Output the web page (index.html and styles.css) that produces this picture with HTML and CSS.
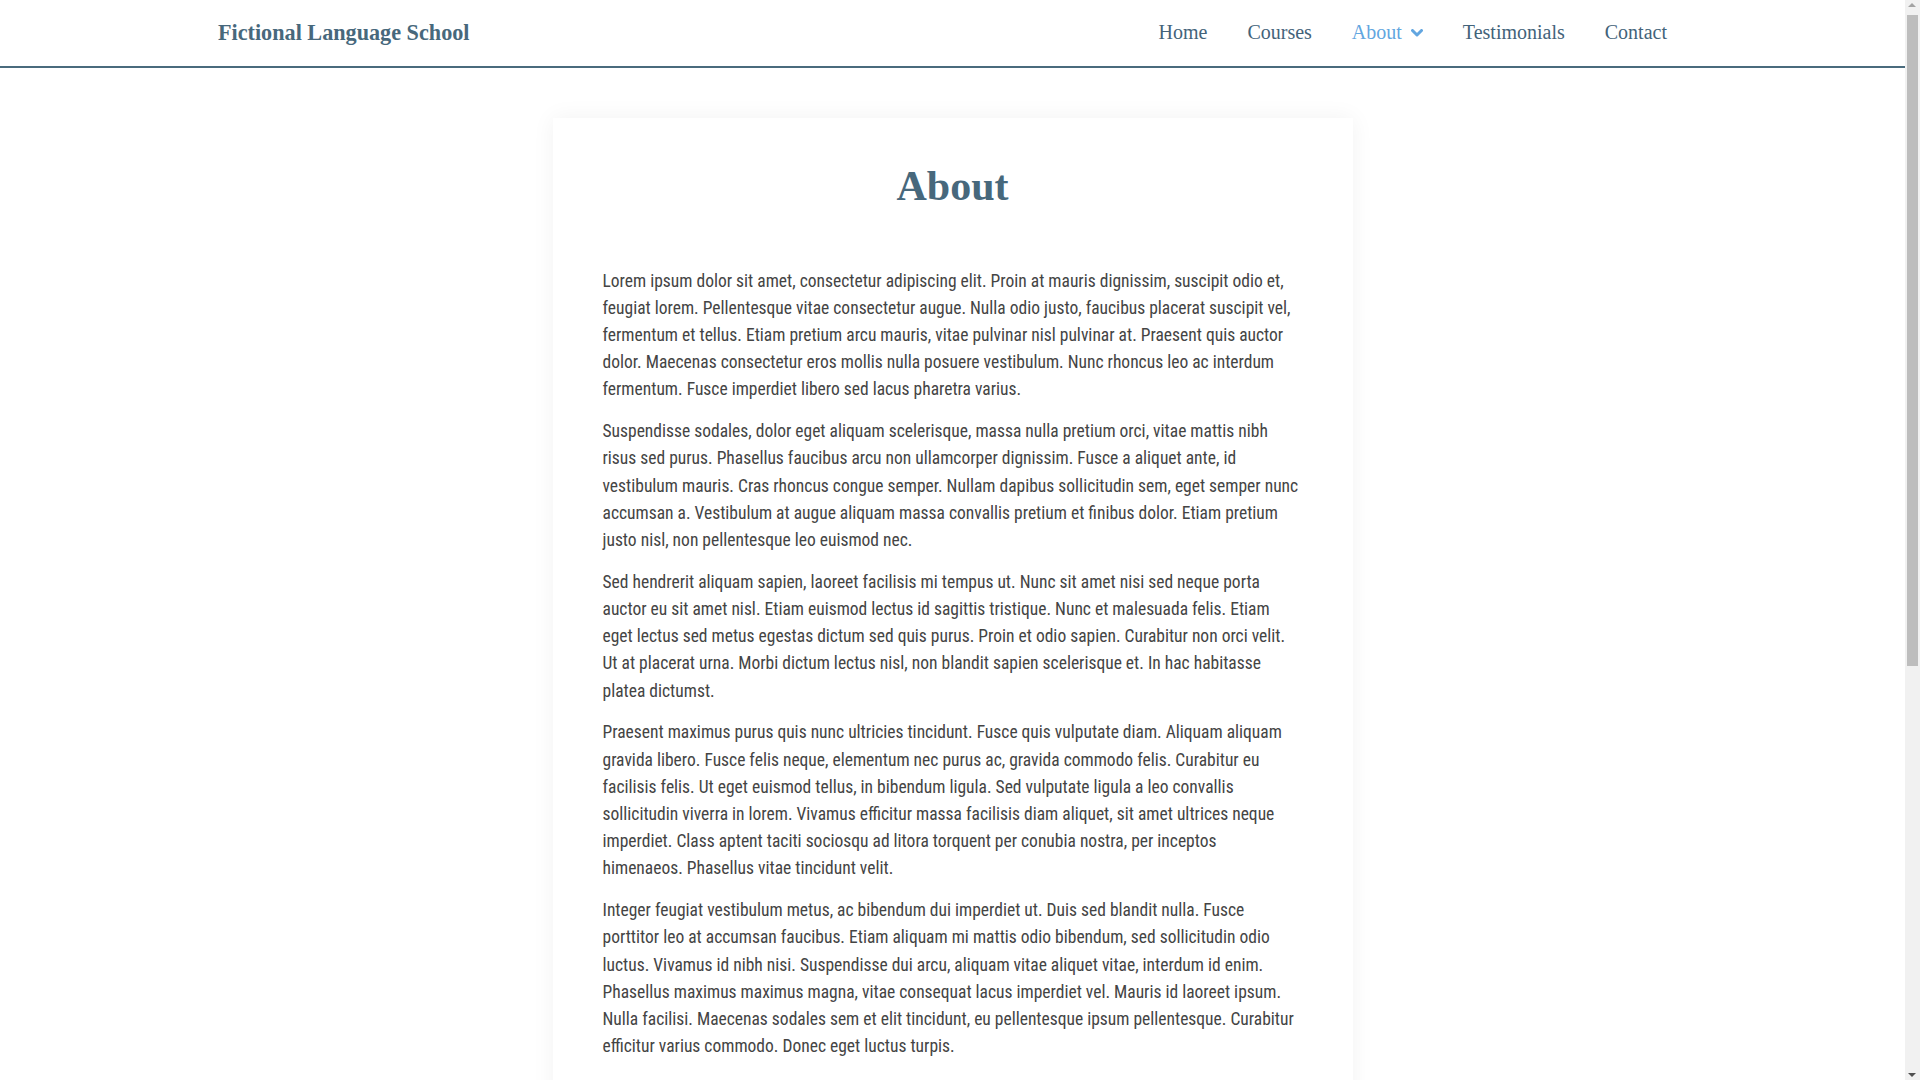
FILE: index.html
```html
<!DOCTYPE html>
<html lang="en">
<head>
<meta charset="utf-8">
<title>About - Fictional Language School</title>
<link rel="stylesheet" href="styles.css">
</head>
<body>
<header class="site-header">
  <div class="header-inner">
    <a class="logo" href="#">Fictional Language School</a>
    <nav class="main-nav">
      <a class="nav-link" href="#">Home</a>
      <a class="nav-link" href="#">Courses</a>
      <a class="nav-link active" href="#">About
        <svg class="chev" width="12" height="8" viewBox="0 0 12 8"><polyline points="1.5,1.5 6,6 10.5,1.5" fill="none" stroke="currentColor" stroke-width="3" stroke-linecap="round" stroke-linejoin="round"/></svg>
      </a>
      <a class="nav-link" href="#">Testimonials</a>
      <a class="nav-link" href="#">Contact</a>
    </nav>
  </div>
</header>

<main class="page">
  <article class="card">
    <h1 class="title">About</h1>
    <p>Lorem ipsum dolor sit amet, consectetur adipiscing elit. Proin at mauris dignissim, suscipit odio et, feugiat lorem. Pellentesque vitae consectetur augue. Nulla odio justo, faucibus placerat suscipit vel, fermentum et tellus. Etiam pretium arcu mauris, vitae pulvinar nisl pulvinar at. Praesent quis auctor dolor. Maecenas consectetur eros mollis nulla posuere vestibulum. Nunc rhoncus leo ac interdum fermentum. Fusce imperdiet libero sed lacus pharetra varius.</p>
    <p>Suspendisse sodales, dolor eget aliquam scelerisque, massa nulla pretium orci, vitae mattis nibh risus sed purus. Phasellus faucibus arcu non ullamcorper dignissim. Fusce a aliquet ante, id vestibulum mauris. Cras rhoncus congue semper. Nullam dapibus sollicitudin sem, eget semper nunc accumsan a. Vestibulum at augue aliquam massa convallis pretium et finibus dolor. Etiam pretium justo nisl, non pellentesque leo euismod nec.</p>
    <p>Sed hendrerit aliquam sapien, laoreet facilisis mi tempus ut. Nunc sit amet nisi sed neque porta auctor eu sit amet nisl. Etiam euismod lectus id sagittis tristique. Nunc et malesuada felis. Etiam eget lectus sed metus egestas dictum sed quis purus. Proin et odio sapien. Curabitur non orci velit. Ut at placerat urna. Morbi dictum lectus nisl, non blandit sapien scelerisque et. In hac habitasse platea dictumst.</p>
    <p>Praesent maximus purus quis nunc ultricies tincidunt. Fusce quis vulputate diam. Aliquam aliquam gravida libero. Fusce felis neque, elementum nec purus ac, gravida commodo felis. Curabitur eu facilisis felis. Ut eget euismod tellus, in bibendum ligula. Sed vulputate ligula a leo convallis sollicitudin viverra in lorem. Vivamus efficitur massa facilisis diam aliquet, sit amet ultrices neque imperdiet. Class aptent taciti sociosqu ad litora torquent per conubia nostra, per inceptos himenaeos. Phasellus vitae tincidunt velit.</p>
    <p>Integer feugiat vestibulum metus, ac bibendum dui imperdiet ut. Duis sed blandit nulla. Fusce porttitor leo at accumsan faucibus. Etiam aliquam mi mattis odio bibendum, sed sollicitudin odio luctus. Vivamus id nibh nisi. Suspendisse dui arcu, aliquam vitae aliquet vitae, interdum id enim. Phasellus maximus maximus magna, vitae consequat lacus imperdiet vel. Mauris id laoreet ipsum. Nulla facilisi. Maecenas sodales sem et elit tincidunt, eu pellentesque ipsum pellentesque. Curabitur efficitur varius commodo. Donec eget luctus turpis.</p>
    <p>Aenean vel lorem non nisl facilisis fermentum. Mauris ac ligula sed justo tincidunt ultricies. Donec consequat, nibh at pretium vulputate, massa leo sagittis magna, non congue tortor lectus non sem. Quisque venenatis quam quis nisl posuere, vitae blandit risus dictum. Integer a erat sed purus rhoncus euismod. Nam luctus eros sit amet lectus tempus, id tristique mi pretium.</p>
    <p>Curabitur volutpat, orci ut dignissim ullamcorper, nibh augue gravida nunc, non scelerisque dui arcu a lectus. Sed sit amet felis vitae metus posuere aliquam. Pellentesque habitant morbi tristique senectus et netus et malesuada fames ac turpis egestas. Morbi eget lacus ut nunc placerat vulputate in at nibh. Vestibulum ante ipsum primis in faucibus orci luctus et ultrices posuere cubilia curae.</p>
    <p>Donec ornare tortor id sem facilisis, sed tempus justo consequat. Cras at ligula vitae mauris mattis volutpat. Aliquam erat volutpat. Suspendisse potenti. Nulla eu lacus nec eros bibendum venenatis vel vel felis. Proin hendrerit velit ac lacus dapibus, at semper magna faucibus. Vivamus ac semper arcu, quis pulvinar ipsum.</p>
    <p>Etiam sagittis ex in ipsum convallis, nec feugiat orci fermentum. Ut quis augue ac lorem ultricies porttitor. Fusce eget mi sed odio tempor aliquet. Maecenas malesuada nibh at justo faucibus, sed ullamcorper nunc consequat. In vitae lectus id neque pharetra euismod.</p>
  </article>
</main>

<div class="scrollbar" aria-hidden="true">
  <span class="sb-arrow sb-up"></span>
  <span class="sb-thumb"></span>
  <span class="sb-arrow sb-down"></span>
</div>
</body>
</html>
```
FILE: styles.css
```css
html, body {
  margin: 0;
  padding: 0;
  background: #ffffff;
}

body {
  font-family: "Roboto", "Open Sans", sans-serif;
  color: #444444;
  padding-right: 15px;
}

a {
  text-decoration: none;
  color: inherit;
}

/* Header */
.site-header {
  height: 66px;
  border-bottom: 2px solid #4a6b7d;
  background: #ffffff;
}

.header-inner {
  height: 100%;
  display: flex;
  align-items: center;
  justify-content: space-between;
  padding: 0 218px;
}

.logo {
  font-family: "Liberation Serif", "Times New Roman", serif;
  font-weight: 700;
  font-size: 22.2px;
  color: #47687c;
  padding-bottom: 1px;
}

.main-nav {
  display: flex;
  align-items: center;
  padding-bottom: 1px;
}

.nav-link {
  display: flex;
  align-items: center;
  padding: 0 20px;
  font-family: "Liberation Serif", "Times New Roman", serif;
  font-size: 20px;
  color: #43637a;
}

.nav-link.active {
  color: #62a6e0;
}

.chev {
  margin-left: 9px;
  margin-top: 1px;
}

/* Content */
.page {
  padding: 50px 0 50px;
}

.card {
  width: 800px;
  margin: 0 auto;
  box-sizing: border-box;
  padding: 44px 53px 44px 50px;
  background: #ffffff;
  box-shadow: 0 0 22px rgba(0, 0, 0, 0.055);
}

.title {
  margin: 0 -3px 57.5px 0;
  font-family: "Liberation Serif", "Times New Roman", serif;
  font-weight: 700;
  font-size: 42px;
  line-height: 48px;
  text-align: center;
  color: #47687c;
}

.card p {
  margin: 0 0 14.6px;
  font-family: "Roboto", sans-serif;
  font-stretch: condensed;
  font-size: 17.5px;
  line-height: 27.2px;
}

.card p:last-child {
  margin-bottom: 0;
}

/* Browser scrollbar as seen in the reference */
.scrollbar {
  position: fixed;
  top: 0;
  right: 0;
  width: 15px;
  height: 100vh;
  background: #f1f1f1;
}

.sb-thumb {
  position: absolute;
  top: 15px;
  left: 2px;
  width: 11px;
  height: 651px;
  background: #bdbdbd;
}

.sb-arrow {
  position: absolute;
  left: 3px;
  width: 0;
  height: 0;
  border-left: 4.5px solid transparent;
  border-right: 4.5px solid transparent;
}

.sb-up {
  top: 3px;
  border-bottom: 4.5px solid #a3a3a3;
}

.sb-down {
  bottom: 3px;
  border-top: 4.5px solid #505050;
}
```
